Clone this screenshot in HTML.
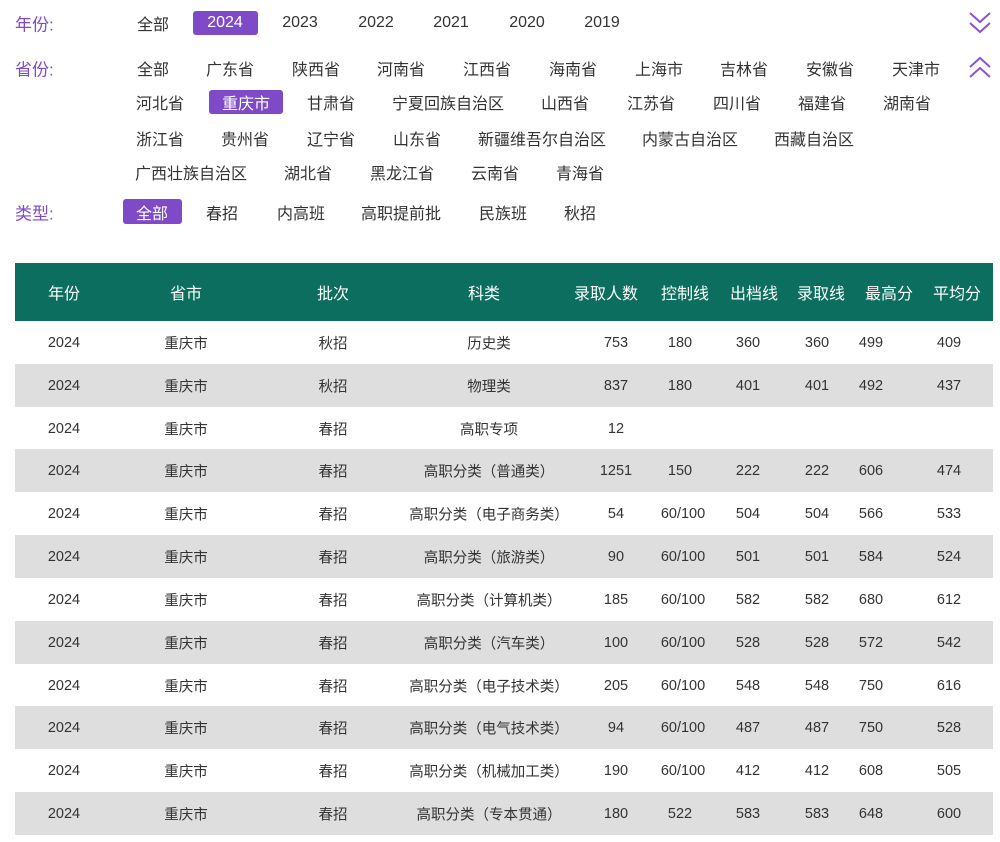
<!DOCTYPE html>
<html><head><meta charset="utf-8"><style>
body{margin:0;width:1000px;height:842px;background:#fff;font-family:"Liberation Sans","Noto Sans CJK SC",sans-serif;position:relative;overflow:hidden;color:#333}
.t{position:absolute;transform:translate(-50%,-50%);font-size:16px;white-space:nowrap;color:#333}
.l{position:absolute;transform:translateY(-50%);font-size:17px;color:#7f4ac8;left:15px}
.b{position:absolute;background:#7f4ac8;border-radius:3px}
.w{color:#fff}
.hd{position:absolute;left:15px;top:263px;width:978px;height:58px;background:#0b6e5e}
.r{position:absolute;left:15px;width:978px;height:43px}
.g{background:#dedede}
.c{position:absolute;top:50%;transform:translate(-50%,-50%);font-size:14.5px;white-space:nowrap}
.h{position:absolute;top:50%;transform:translate(-50%,-50%);font-size:16px;color:#fff;white-space:nowrap}
</style></head><body>
<div class="l" style="top:23px">年份:</div>
<div class="l" style="top:68px">省份:</div>
<div class="l" style="top:212px">类型:</div>
<div class="b" style="left:193px;top:11px;width:65px;height:24px"></div>
<div class="b" style="left:209px;top:90px;width:74px;height:24px"></div>
<div class="b" style="left:123px;top:199px;width:59px;height:25px"></div>
<div class="t" style="left:153px;top:23px">全部</div><div class="t w" style="left:225px;top:23px">2024</div><div class="t" style="left:300px;top:23px">2023</div><div class="t" style="left:376px;top:23px">2022</div><div class="t" style="left:451px;top:23px">2021</div><div class="t" style="left:527px;top:23px">2020</div><div class="t" style="left:602px;top:23px">2019</div>
<div class="t" style="left:153px;top:68px">全部</div><div class="t" style="left:230px;top:68px">广东省</div><div class="t" style="left:316px;top:68px">陕西省</div><div class="t" style="left:401px;top:68px">河南省</div><div class="t" style="left:487px;top:68px">江西省</div><div class="t" style="left:573px;top:68px">海南省</div><div class="t" style="left:659px;top:68px">上海市</div><div class="t" style="left:744px;top:68px">吉林省</div><div class="t" style="left:830px;top:68px">安徽省</div><div class="t" style="left:916px;top:68px">天津市</div>
<div class="t" style="left:160px;top:102px">河北省</div><div class="t w" style="left:246px;top:102px">重庆市</div><div class="t" style="left:331px;top:102px">甘肃省</div><div class="t" style="left:448px;top:102px">宁夏回族自治区</div><div class="t" style="left:565px;top:102px">山西省</div><div class="t" style="left:651px;top:102px">江苏省</div><div class="t" style="left:737px;top:102px">四川省</div><div class="t" style="left:822px;top:102px">福建省</div><div class="t" style="left:907px;top:102px">湖南省</div>
<div class="t" style="left:160px;top:138px">浙江省</div><div class="t" style="left:245px;top:138px">贵州省</div><div class="t" style="left:331px;top:138px">辽宁省</div><div class="t" style="left:417px;top:138px">山东省</div><div class="t" style="left:542px;top:138px">新疆维吾尔自治区</div><div class="t" style="left:690px;top:138px">内蒙古自治区</div><div class="t" style="left:814px;top:138px">西藏自治区</div>
<div class="t" style="left:191px;top:172px">广西壮族自治区</div><div class="t" style="left:308px;top:172px">湖北省</div><div class="t" style="left:402px;top:172px">黑龙江省</div><div class="t" style="left:495px;top:172px">云南省</div><div class="t" style="left:580px;top:172px">青海省</div>
<div class="t w" style="left:152px;top:212px">全部</div><div class="t" style="left:222px;top:212px">春招</div><div class="t" style="left:301px;top:212px">内高班</div><div class="t" style="left:401px;top:212px">高职提前批</div><div class="t" style="left:503px;top:212px">民族班</div><div class="t" style="left:580px;top:212px">秋招</div>
<svg style="position:absolute;left:966px;top:10px" width="28" height="26" viewBox="0 0 28 26" fill="none" stroke="#8a55d0" stroke-width="2"><path d="M4 3l10 9 10-9M4 13l10 9 10-9"/></svg>
<svg style="position:absolute;left:966px;top:54px" width="28" height="26" viewBox="0 0 28 26" fill="none" stroke="#8a55d0" stroke-width="2"><path d="M4 13l10-9 10 9M4 23l10-9 10 9"/></svg>
<div class="hd"><span class="h" style="left:49px">年份</span><span class="h" style="left:171px">省市</span><span class="h" style="left:318px">批次</span><span class="h" style="left:469px">科类</span><span class="h" style="left:591px">录取人数</span><span class="h" style="left:670px">控制线</span><span class="h" style="left:739px">出档线</span><span class="h" style="left:806px">录取线</span><span class="h" style="left:874px">最高分</span><span class="h" style="left:942px">平均分</span></div>
<div class="r" style="top:321px"><span class="c" style="left:49px">2024</span><span class="c" style="left:171px">重庆市</span><span class="c" style="left:318px">秋招</span><span class="c" style="left:474px">历史类</span><span class="c" style="left:601px">753</span><span class="c" style="left:665px">180</span><span class="c" style="left:733px">360</span><span class="c" style="left:802px">360</span><span class="c" style="left:856px">499</span><span class="c" style="left:934px">409</span></div>
<div class="r g" style="top:364px"><span class="c" style="left:49px">2024</span><span class="c" style="left:171px">重庆市</span><span class="c" style="left:318px">秋招</span><span class="c" style="left:474px">物理类</span><span class="c" style="left:601px">837</span><span class="c" style="left:665px">180</span><span class="c" style="left:733px">401</span><span class="c" style="left:802px">401</span><span class="c" style="left:856px">492</span><span class="c" style="left:934px">437</span></div>
<div class="r" style="top:407px"><span class="c" style="left:49px">2024</span><span class="c" style="left:171px">重庆市</span><span class="c" style="left:318px">春招</span><span class="c" style="left:474px">高职专项</span><span class="c" style="left:601px">12</span></div>
<div class="r g" style="top:449px"><span class="c" style="left:49px">2024</span><span class="c" style="left:171px">重庆市</span><span class="c" style="left:318px">春招</span><span class="c" style="left:474px">高职分类（普通类）</span><span class="c" style="left:601px">1251</span><span class="c" style="left:665px">150</span><span class="c" style="left:733px">222</span><span class="c" style="left:802px">222</span><span class="c" style="left:856px">606</span><span class="c" style="left:934px">474</span></div>
<div class="r" style="top:492px"><span class="c" style="left:49px">2024</span><span class="c" style="left:171px">重庆市</span><span class="c" style="left:318px">春招</span><span class="c" style="left:474px">高职分类（电子商务类）</span><span class="c" style="left:601px">54</span><span class="c" style="left:668px">60/100</span><span class="c" style="left:733px">504</span><span class="c" style="left:802px">504</span><span class="c" style="left:856px">566</span><span class="c" style="left:934px">533</span></div>
<div class="r g" style="top:535px"><span class="c" style="left:49px">2024</span><span class="c" style="left:171px">重庆市</span><span class="c" style="left:318px">春招</span><span class="c" style="left:474px">高职分类（旅游类）</span><span class="c" style="left:601px">90</span><span class="c" style="left:668px">60/100</span><span class="c" style="left:733px">501</span><span class="c" style="left:802px">501</span><span class="c" style="left:856px">584</span><span class="c" style="left:934px">524</span></div>
<div class="r" style="top:578px"><span class="c" style="left:49px">2024</span><span class="c" style="left:171px">重庆市</span><span class="c" style="left:318px">春招</span><span class="c" style="left:474px">高职分类（计算机类）</span><span class="c" style="left:601px">185</span><span class="c" style="left:668px">60/100</span><span class="c" style="left:733px">582</span><span class="c" style="left:802px">582</span><span class="c" style="left:856px">680</span><span class="c" style="left:934px">612</span></div>
<div class="r g" style="top:621px"><span class="c" style="left:49px">2024</span><span class="c" style="left:171px">重庆市</span><span class="c" style="left:318px">春招</span><span class="c" style="left:474px">高职分类（汽车类）</span><span class="c" style="left:601px">100</span><span class="c" style="left:668px">60/100</span><span class="c" style="left:733px">528</span><span class="c" style="left:802px">528</span><span class="c" style="left:856px">572</span><span class="c" style="left:934px">542</span></div>
<div class="r" style="top:664px"><span class="c" style="left:49px">2024</span><span class="c" style="left:171px">重庆市</span><span class="c" style="left:318px">春招</span><span class="c" style="left:474px">高职分类（电子技术类）</span><span class="c" style="left:601px">205</span><span class="c" style="left:668px">60/100</span><span class="c" style="left:733px">548</span><span class="c" style="left:802px">548</span><span class="c" style="left:856px">750</span><span class="c" style="left:934px">616</span></div>
<div class="r g" style="top:706px"><span class="c" style="left:49px">2024</span><span class="c" style="left:171px">重庆市</span><span class="c" style="left:318px">春招</span><span class="c" style="left:474px">高职分类（电气技术类）</span><span class="c" style="left:601px">94</span><span class="c" style="left:668px">60/100</span><span class="c" style="left:733px">487</span><span class="c" style="left:802px">487</span><span class="c" style="left:856px">750</span><span class="c" style="left:934px">528</span></div>
<div class="r" style="top:749px"><span class="c" style="left:49px">2024</span><span class="c" style="left:171px">重庆市</span><span class="c" style="left:318px">春招</span><span class="c" style="left:474px">高职分类（机械加工类）</span><span class="c" style="left:601px">190</span><span class="c" style="left:668px">60/100</span><span class="c" style="left:733px">412</span><span class="c" style="left:802px">412</span><span class="c" style="left:856px">608</span><span class="c" style="left:934px">505</span></div>
<div class="r g" style="top:792px"><span class="c" style="left:49px">2024</span><span class="c" style="left:171px">重庆市</span><span class="c" style="left:318px">春招</span><span class="c" style="left:474px">高职分类（专本贯通）</span><span class="c" style="left:601px">180</span><span class="c" style="left:665px">522</span><span class="c" style="left:733px">583</span><span class="c" style="left:802px">583</span><span class="c" style="left:856px">648</span><span class="c" style="left:934px">600</span></div>
</body></html>
